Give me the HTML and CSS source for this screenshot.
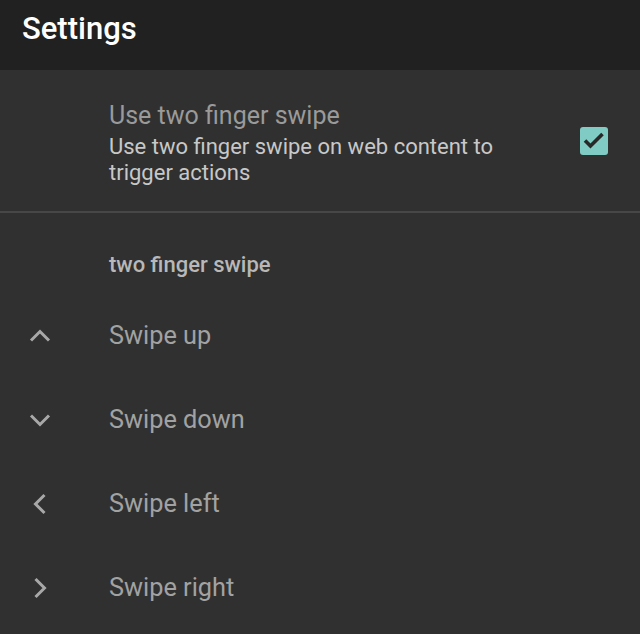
FILE: index.html
```html
<!DOCTYPE html>
<html>
<head>
<meta charset="utf-8">
<link rel="stylesheet" href="styles.css">
</head>
<body>
<header class="appbar"><h1 class="appbar-title">Settings</h1></header>
<main class="prefs">
  <div class="pref pref-switch">
    <div class="pref-icon"></div>
    <div class="pref-text">
      <div class="pref-title">Use two finger swipe</div>
      <div class="pref-summary">Use two finger swipe on web content to trigger actions</div>
    </div>
    <div class="checkbox">
      <svg viewBox="0 0 28 28" width="28" height="28"><path d="M5 13.5l5.5 5.5L22.5 7" fill="none" stroke="#282828" stroke-width="3.6"/></svg>
    </div>
  </div>
  <div class="divider"></div>
  <div class="category">two finger swipe</div>
  <div class="pref pref-item">
    <div class="pref-icon"><svg viewBox="0 0 24 24" width="24" height="24"><path d="M3 16.5L12 7.5l9 9" fill="none" stroke="#a8a8a8" stroke-width="3"/></svg></div>
    <div class="item-title">Swipe up</div>
  </div>
  <div class="pref pref-item">
    <div class="pref-icon"><svg viewBox="0 0 24 24" width="24" height="24"><path d="M3 7.5l9 9 9-9" fill="none" stroke="#a8a8a8" stroke-width="3"/></svg></div>
    <div class="item-title">Swipe down</div>
  </div>
  <div class="pref pref-item">
    <div class="pref-icon"><svg viewBox="0 0 24 24" width="24" height="24"><path d="M16.5 3L7.5 12l9 9" fill="none" stroke="#a8a8a8" stroke-width="3"/></svg></div>
    <div class="item-title">Swipe left</div>
  </div>
  <div class="pref pref-item">
    <div class="pref-icon"><svg viewBox="0 0 24 24" width="24" height="24"><path d="M7.5 3l9 9-9 9" fill="none" stroke="#a8a8a8" stroke-width="3"/></svg></div>
    <div class="item-title">Swipe right</div>
  </div>
</main>
</body>
</html>
```
FILE: styles.css
```css
html, body {
  margin: 0;
  padding: 0;
  background: #303030;
  font-family: Roboto, "Noto Sans", sans-serif;
  width: 640px;
  height: 634px;
  overflow: hidden;
}
.appbar {
  height: 70px;
  background: #212121;
  box-sizing: border-box;
  padding: 11px 0 0 22px;
}
.appbar-title {
  margin: 0;
  font-size: 31px;
  font-weight: 500;
  color: #ffffff;
  line-height: 36px;
}
.prefs {
  display: flex;
  flex-direction: column;
}
.pref {
  display: flex;
  align-items: center;
}
.pref-icon {
  width: 80px;
  flex: none;
  display: flex;
  justify-content: center;
  align-items: center;
}
.pref-switch {
  height: 141px;
  box-sizing: border-box;
  padding-right: 32px;
}
.pref-text {
  flex: 1;
  margin-left: 29px;
  padding-right: 60px;
  padding-top: 7px;
}
.pref-title {
  font-size: 25px;
  line-height: 28px;
  color: #9a9a9a;
}
.pref-summary {
  margin-top: 4px;
  font-size: 22px;
  line-height: 26px;
  color: #c8c8c8;
}
.checkbox {
  width: 28px;
  height: 28px;
  border-radius: 3px;
  background: #80cbc4;
  flex: none;
  display: flex;
}
.divider {
  height: 2px;
  background: #474747;
}
.category {
  padding: 40px 0 16px 109px;
  font-size: 22px;
  line-height: 24px;
  font-weight: 500;
  color: #b8b8b8;
}
.pref-item {
  height: 84px;
  box-sizing: border-box;
  padding-top: 2px;
}
.item-title {
  margin-left: 29px;
  font-size: 25.3px;
  line-height: 28px;
  color: #a2a2a2;
}
```
